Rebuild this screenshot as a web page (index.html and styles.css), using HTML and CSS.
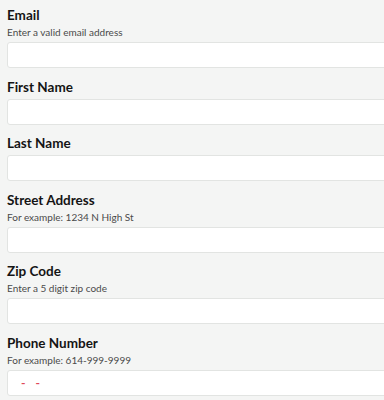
FILE: index.html
```html
<!DOCTYPE html>
<html>
	<head>
		<meta charset="utf-8" />
		<title>Contact details</title>
		<link rel="stylesheet" href="styles.css">
	</head>
	<body>
		<form class="signup">
			<div class="field">
				<label class="field-label" for="email">Email</label>
				<div class="field-help">Enter a valid email address</div>
				<input class="field-input" id="email" type="email">
			</div>
			<div class="field">
				<label class="field-label" for="first">First Name</label>
				<input class="field-input" id="first" type="text">
			</div>
			<div class="field">
				<label class="field-label" for="last">Last Name</label>
				<input class="field-input" id="last" type="text">
			</div>
			<div class="field">
				<label class="field-label" for="street">Street Address</label>
				<div class="field-help">For example: 1234 N High St</div>
				<input class="field-input" id="street" type="text">
			</div>
			<div class="field">
				<label class="field-label" for="zip">Zip Code</label>
				<div class="field-help">Enter a 5 digit zip code</div>
				<input class="field-input" id="zip" type="text">
			</div>
			<div class="field">
				<label class="field-label">Phone Number</label>
				<div class="field-help">For example: 614-999-9999</div>
				<div class="field-input mask"><span class="dash">-</span><span class="dash">-</span></div>
			</div>
		</form>
	</body>
</html>
```

FILE: styles.css
```css
html, body {
	margin: 0;
	overflow: hidden;
	background: #f4f5f4;
}
body {
	font-family: Lato, "Noto Sans", sans-serif;
	color: #141414;
	padding: 6px 0 0 7px;
}
.field {
	display: flex;
	flex-direction: column;
	margin-bottom: 9.5px;
}
.field-label {
	font-size: 13.5px;
	font-weight: 700;
	line-height: 18px;
	margin-bottom: 3px;
}
.field-label + .field-help {
	margin-top: -3px;
}
.field-help {
	font-size: 10px;
	line-height: 16px;
	color: #4a4a4a;
	margin-bottom: 2px;
}
.field-input {
	box-sizing: border-box;
	width: 420px;
	height: 26px;
	margin: 0;
	border: 1px solid #e2e4e2;
	border-radius: 3px;
	background: #fff;
	font: inherit;
	font-size: 12px;
}
/* phone mask */
.mask {
	display: flex;
	align-items: center;
	padding-left: 13px;
}
.dash {
	color: #e0485a;
	font-size: 12px;
	font-weight: 700;
	margin-right: 10px;
}
```
